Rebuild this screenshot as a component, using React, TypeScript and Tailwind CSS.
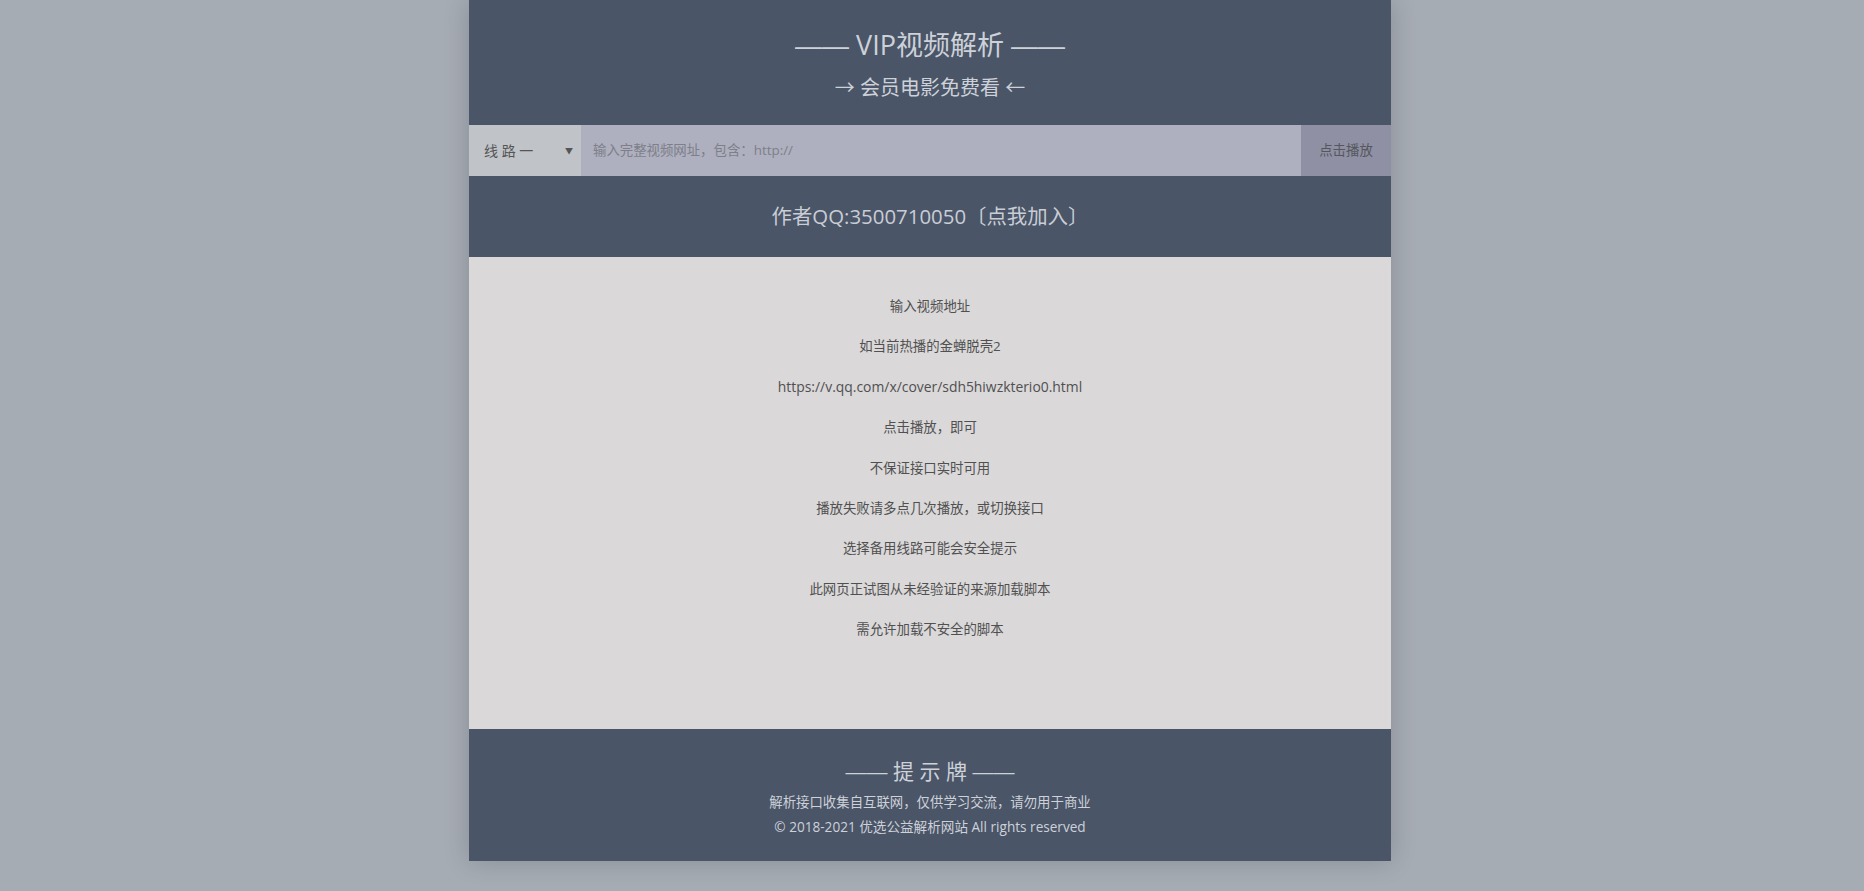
import React from "react";

const font = { fontFamily: '"Open Sans","Noto Sans CJK SC",sans-serif' };
const dashFont = { fontFamily: '"Liberation Sans",sans-serif' };

const lines = [
  "输入视频地址",
  "如当前热播的金蝉脱壳2",
  "https://v.qq.com/x/cover/sdh5hiwzkterio0.html",
  "点击播放，即可",
  "不保证接口实时可用",
  "播放失败请多点几次播放，或切换接口",
  "选择备用线路可能会安全提示",
  "此网页正试图从未经验证的来源加载脚本",
  "需允许加载不安全的脚本",
];

function Dash() {
  return <span style={dashFont}>——</span>;
}

export default function App() {
  return (
    <div className="min-h-screen w-full bg-[#a6acb4]" style={font}>
      <div className="ml-[469px] w-[922px] flex flex-col shadow-[0_0_24px_rgba(0,0,0,0.18)]">
        <div className="h-[125px] bg-[#4a5568] flex flex-col items-center pt-[26px]">
          <div className="text-[27px] leading-[38px] text-[#cdd1d8]">
            <Dash /> VIP视频解析 <Dash />
          </div>
          <div className="mt-[9px] text-[20px] leading-[28px] text-[#cdd1d8]">→ 会员电影免费看 ←</div>
        </div>
        <div className="h-[51px] flex">
          <div className="w-[112px] bg-[#c0c3c8] flex items-center justify-between pl-[15px] pr-[8px] text-[#555]">
            <span className="text-[14px]">线 路 一</span>
            <span className="text-[8px]">▼</span>
          </div>
          <div className="flex-1 bg-[#aeb0bf] flex items-center pl-[12px] text-[13.4px] text-[#7d7f8a]">
            输入完整视频网址，包含：http://
          </div>
          <div className="w-[90px] bg-[#8f90a3] flex items-center justify-center text-[13.4px] text-[#55575f]">
            点击播放
          </div>
        </div>
        <div className="h-[81px] bg-[#4a5568] flex items-center justify-center text-[20.4px] text-[#c9cdd5]">
          作者QQ:3500710050〔点我加入〕
        </div>
        <div className="h-[472px] bg-[#dad8d9] pt-[29px] flex flex-col items-center">
          {lines.map((l, i) => (
            <p
              key={l}
              className={
                i === 2
                  ? "text-[13.9px] leading-[40.4px] text-[#505050]"
                  : "text-[13.4px] leading-[40.4px] text-[#505050]"
              }
            >
              {l}
            </p>
          ))}
        </div>
        <div className="h-[132px] bg-[#4a5568] flex flex-col items-center pt-[27px] text-[#cdd1d8]">
          <div className="text-[21px] leading-[30px]">
            <Dash /> 提 示 牌 <Dash />
          </div>
          <div className="mt-[5px] text-[13.4px] leading-[20px]">解析接口收集自互联网，仅供学习交流，请勿用于商业</div>
          <div className="mt-[5px] text-[13.6px] leading-[20px]">© 2018-2021 优选公益解析网站 All rights reserved</div>
        </div>
      </div>
    </div>
  );
}
